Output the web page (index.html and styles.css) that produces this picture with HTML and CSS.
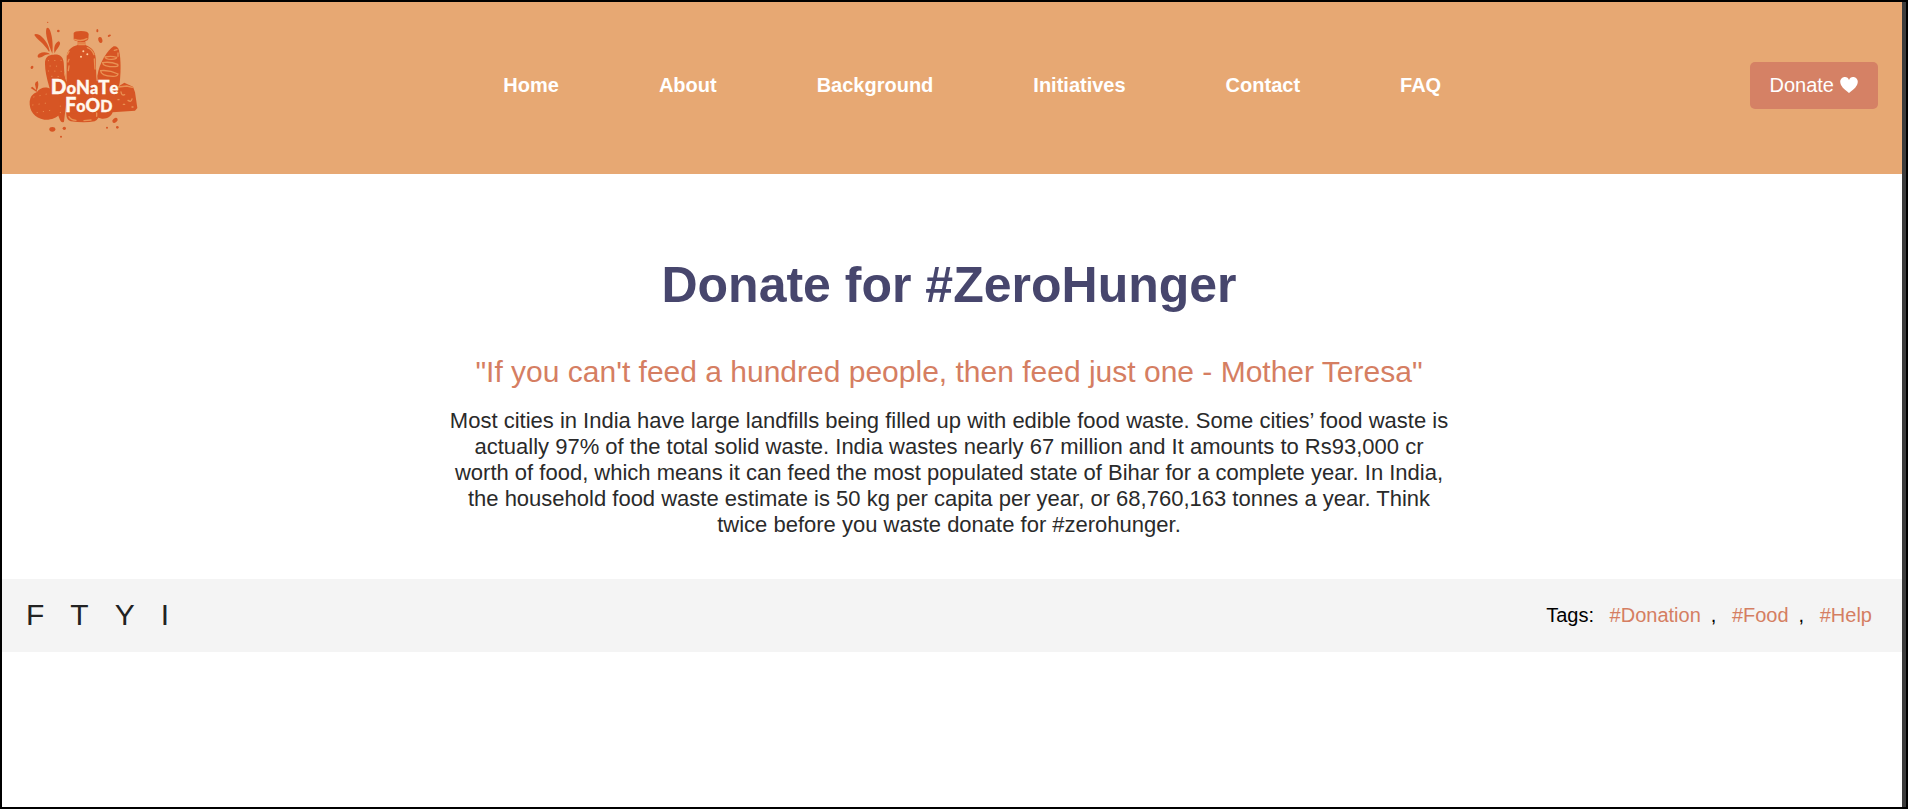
FILE: index.html
```html
<!DOCTYPE html>
<html lang="en">
<head>
<meta charset="utf-8">
<meta name="viewport" content="width=device-width, initial-scale=1">
<title>Donate Food</title>
<link rel="stylesheet" href="styles.css">
</head>
<body>
<div class="page">
  <header class="header">
    <a class="logo" href="#" aria-label="Donate Food">
      <svg class="logo-art" viewBox="69 57 516 396">
        <g fill="#d75524">
          <path d="M157 161C145 132 135 103 139 86Q145 78 150 91C158 112 159 139 157 161Z"/>
          <path d="M147 155C132 130 110 118 103 105Q105 98 120 106C137 119 146 137 149 153Z"/>
          <path d="M164 160C160 143 165 129 176 124Q184 128 177 139C172 149 167 150 164 160Z"/>
          <path d="M150 163C137 160 127 173 116 173Q109 168 117 161C130 155 142 156 150 163Z"/>
          <path d="M135 192C134 171 146 164 161 164C178 162 189 169 191 187C193 205 191 218 198 242L202 280L192 365Q185 370 180 360L169 332L148 262Q135 218 135 192Z"/>
          <path d="M221 99Q223 93 243 93Q265 93 266 102L265 117Q263 123 256 123L256 135C276 143 286 155 287 174L289 230L299 335Q298 357 284 364Q254 370 212 364Q199 360 199 343L200 170C202 150 214 140 233 135L233 124Q222 123 221 118Z"/>
          <path d="M292 228C298 186 323 151 341 139Q352 136 357 151C364 182 362 221 359 249L350 292L295 292Z"/>
          <path d="M349 263L373 248L399 260L405 277L412 324L405 332L338 337C333 350 322 357 306 356L286 350L288 270Z"/>
          <path d="M111 276C121 261 139 258 155 268L176 285L180 342C169 354 151 361 133 359C104 355 87 333 89 304Q91 284 111 276Z"/>
          <path d="M110 276L92 264L97 260L109 271L105 253Q105 245 113 243Q118 255 111 270Z"/>
          <path d="M151 245L342 242L350 281L328 302L325 338L199 340L196 302L153 291Z"/>
          <ellipse cx="301" cy="120" rx="6" ry="9" transform="rotate(-15 301 120)"/>
          <ellipse cx="292" cy="92" rx="3" ry="5"/><ellipse cx="328" cy="107" rx="5" ry="3" transform="rotate(-25 328 107)"/>
          <circle cx="175" cy="93" r="4"/><circle cx="143" cy="67" r="2"/>
          <ellipse cx="96" cy="202" rx="4" ry="5" transform="rotate(30 96 202)"/>
          <ellipse cx="157" cy="388" rx="9" ry="7"/><circle cx="193" cy="385" r="5"/><circle cx="183" cy="410" r="3"/>
          <ellipse cx="345" cy="361" rx="9" ry="6" transform="rotate(-38 345 361)"/><circle cx="352" cy="382" r="4"/><circle cx="321" cy="383" r="3"/>
        </g>
        <g fill="none" stroke="#e99254" stroke-width="4" stroke-linecap="round">
          <path d="M224 118Q243 126 261 116M233 129H255M236 134H254"/>
          <path d="M315 171Q333 167 350 172Q350 178 334 178Q316 178 315 171ZM308 188Q330 184 353 193Q357 199 346 200Q308 200 308 188ZM302 212Q328 209 354 222Q353 229 339 229Q302 227 302 212Z"/>
          <path d="M262 143Q277 149 282 164M283 177L285 207M207 154L202 164M207 178L204 186M207 198L205 212M207 350Q213 361 228 361M252 362L273 360M290 339V349M356 261L380 258L397 262M343 151L351 149M354 159V169M194 220L198 235"/>
          <path d="M363 276Q365 288 374 284M384 301Q394 308 396 297M354 299H357M370 313H374M396 321H399"/>
        </g>
        <g fill="none" stroke="#e98a4c" stroke-width="3" stroke-linecap="round" stroke-dasharray="1 18">
          <path d="M145 182L184 181M150 198L186 199M145 213L185 214M155 229L187 230M101 291L145 281M98 315L148 308M111 338L157 330M181 318V352"/>
        </g>
        <g fill="#ffd0a0"><circle cx="250" cy="154" r="3"/><circle cx="243" cy="170" r="3"/><circle cx="262" cy="163" r="3"/></g>
        <g class="logo-text">
          <text x="152" y="283"><tspan font-size="62">D</tspan><tspan font-size="50">o</tspan><tspan font-size="54">N</tspan><tspan font-size="48">a</tspan><tspan font-size="56">T</tspan><tspan font-size="50">e</tspan></text>
          <text x="195" y="337"><tspan font-size="60">F</tspan><tspan font-size="48">o</tspan><tspan font-size="54">O</tspan><tspan font-size="48">D</tspan></text>
        </g>
      </svg>
    </a>
    <nav class="nav">
      <a href="#">Home</a>
      <a href="#">About</a>
      <a href="#">Background</a>
      <a href="#">Initiatives</a>
      <a href="#">Contact</a>
      <a href="#">FAQ</a>
    </nav>
    <button class="donate" type="button">Donate
      <svg class="heart" viewBox="0 0 18 16" aria-hidden="true"><path fill="currentColor" d="M9 16C7 14 3 12 1 8C-1 4 1 0 5 0Q8 0 9 3Q10 0 13 0C17 0 19 4 17 8C15 12 11 14 9 16Z"/></svg>
    </button>
  </header>
  <main class="intro">
    <h1>Donate for #ZeroHunger</h1>
    <p class="quote">"If you can't feed a hundred people, then feed just one - Mother Teresa"</p>
    <p class="copy">Most cities in India have large landfills being filled up with edible food waste. Some cities’ food waste is actually 97% of the total solid waste. India wastes nearly 67 million and It amounts to Rs93,000 cr worth of food, which means it can feed the most populated state of Bihar for a complete year. In India, the household food waste estimate is 50 kg per capita per year, or 68,760,163 tonnes a year. Think twice before you waste donate for #zerohunger.</p>
  </main>
  <footer class="footer">
    <div class="social">
      <a href="#">F</a>
      <a href="#">T</a>
      <a href="#">Y</a>
      <a href="#">I</a>
    </div>
    <p class="tags">Tags: <a href="#">#Donation</a>, <a href="#">#Food</a>, <a href="#">#Help</a></p>
  </footer>
</div>
</body>
</html>
```
FILE: styles.css
```css
* {
  box-sizing: border-box;
}

body {
  margin: 0;
  min-height: 100vh;
  display: flex;
  border: 2px solid #000;
  background: #fff;
  font-family: "Liberation Sans", Arial, sans-serif;
  font-size: 20px;
}

a {
  text-decoration: none;
}

.page {
  flex: 1;
  border-right: 4px solid #3c3c3c;
}

.header {
  display: flex;
  align-items: center;
  justify-content: space-between;
  padding: 17px 24px 23px 21px;
  background: #e7a873;
}

.logo-art {
  display: block;
  width: 172px;
  height: 132px;
}

.logo-text {
  fill: #fff8ee;
  stroke: #fff8ee;
  stroke-width: 1px;
  font-family: Lato, "Open Sans", sans-serif;
  font-weight: 900;
}

.nav {
  display: flex;
  gap: 100px;
}

.nav a {
  color: #fff;
  font-weight: 700;
}

.donate {
  display: flex;
  align-items: center;
  gap: 6px;
  padding: 12px 20px;
  border: 0;
  border-radius: 5px;
  background: #d58165;
  color: #fff;
  font: inherit;
}

.heart {
  width: 18px;
  height: 16px;
}

.intro {
  max-width: 1006px;
  margin: 0 auto;
  padding: 82px 6px 41px 0;
  text-align: center;
}

.intro h1 {
  margin: 0 0 41px;
  color: #47466d;
  font-size: 50px;
  line-height: 58px;
}

.quote {
  margin: 0 0 19px;
  color: #d57e62;
  font-size: 30px;
  line-height: 34px;
}

.copy {
  margin: 0;
  color: #2a2a2a;
  font-size: 22px;
  line-height: 26px;
}

.footer {
  display: flex;
  align-items: center;
  justify-content: space-between;
  padding: 19px 20px 20px 24px;
  background: #f4f4f4;
}

.social {
  display: flex;
  gap: 26px;
  font-size: 30px;
  line-height: 34px;
}

.social a {
  color: #222;
}

.tags {
  margin: 0;
  color: #000;
}

.tags a {
  padding: 0 10px;
  color: #d57e62;
}
```
